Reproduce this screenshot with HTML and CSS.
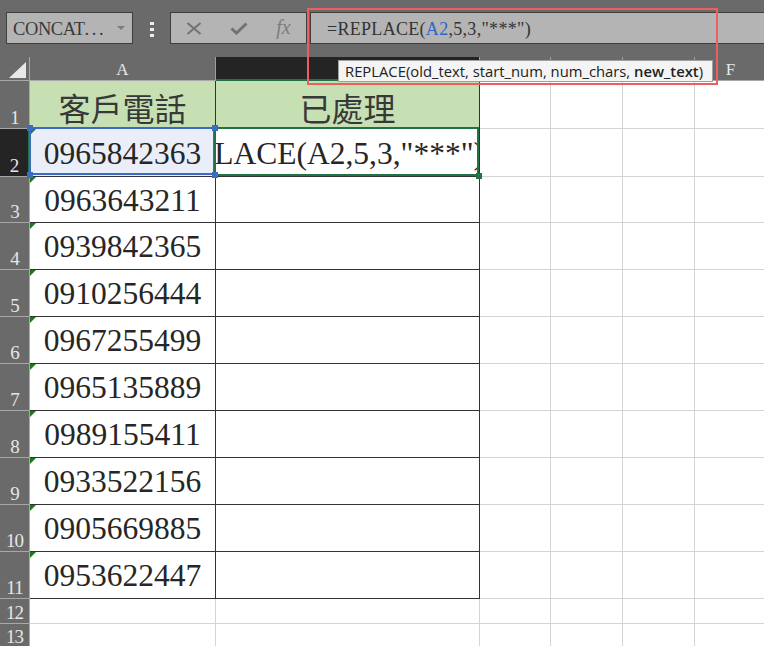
FILE: index.html
```html
<!DOCTYPE html>
<html lang="zh-Hant">
<head>
<meta charset="utf-8">
<title>REPLACE</title>
<link rel="stylesheet" href="styles.css">
</head>
<body>
<div class="app">
  <div class="fbar">
    <div class="namebox"><span class="nb-text">CONCAT<span class="ell">...</span></span><span class="nb-arrow"></span></div>
    <div class="grip"><i></i><i></i><i></i></div>
    <div class="fbtns">
      <span class="slot"><svg width="16" height="13" viewBox="0 0 16 13"><path d="M1.5 1 L14.5 12 M14.5 1 L1.5 12" stroke="#727272" stroke-width="2" fill="none"/></svg></span>
      <span class="slot"><svg width="18" height="13" viewBox="0 0 18 13"><path d="M1.5 6.5 L6.5 11 L16.5 1.5" stroke="#727272" stroke-width="3" fill="none"/></svg></span>
      <span class="slot fx">fx</span>
    </div>
    <div class="finput"><span class="ftext">=REPLACE(<span class="ref">A2</span>,5,3,"***")</span></div>
  </div>

  <div class="sheet">
    <div class="corner"><span class="tri"></span></div>
    <div class="ch">A</div>
    <div class="ch sel"></div>
    <div class="ch"></div>
    <div class="ch"></div>
    <div class="ch"></div>
    <div class="ch">F</div>

    <div class="rh">1</div>
    <div class="t hd">客戶電話</div>
    <div class="t hd">已處理</div>
    <div class="c"></div><div class="c"></div><div class="c"></div><div class="c"></div>

    <div class="rh sel">2</div>
    <div class="t num err selA">0965842363<span class="h tl"></span><span class="h tr"></span><span class="h bl"></span><span class="h br"></span></div>
    <div class="t edit"><div class="clip"><span class="etext">=REPLACE(A2,5,3,"***")</span></div><span class="gh"></span></div>
    <div class="c"></div><div class="c"></div><div class="c"></div><div class="c"></div>

    <div class="rh">3</div>
    <div class="t num err">0963643211</div>
    <div class="t"></div>
    <div class="c"></div><div class="c"></div><div class="c"></div><div class="c"></div>

    <div class="rh">4</div>
    <div class="t num err">0939842365</div>
    <div class="t"></div>
    <div class="c"></div><div class="c"></div><div class="c"></div><div class="c"></div>

    <div class="rh">5</div>
    <div class="t num err">0910256444</div>
    <div class="t"></div>
    <div class="c"></div><div class="c"></div><div class="c"></div><div class="c"></div>

    <div class="rh">6</div>
    <div class="t num err">0967255499</div>
    <div class="t"></div>
    <div class="c"></div><div class="c"></div><div class="c"></div><div class="c"></div>

    <div class="rh">7</div>
    <div class="t num err">0965135889</div>
    <div class="t"></div>
    <div class="c"></div><div class="c"></div><div class="c"></div><div class="c"></div>

    <div class="rh">8</div>
    <div class="t num err">0989155411</div>
    <div class="t"></div>
    <div class="c"></div><div class="c"></div><div class="c"></div><div class="c"></div>

    <div class="rh">9</div>
    <div class="t num err">0933522156</div>
    <div class="t"></div>
    <div class="c"></div><div class="c"></div><div class="c"></div><div class="c"></div>

    <div class="rh">10</div>
    <div class="t num err">0905669885</div>
    <div class="t"></div>
    <div class="c"></div><div class="c"></div><div class="c"></div><div class="c"></div>

    <div class="rh">11</div>
    <div class="t num err">0953622447</div>
    <div class="t"></div>
    <div class="c"></div><div class="c"></div><div class="c"></div><div class="c"></div>

    <div class="rh">12</div>
    <div class="c"></div><div class="c"></div>
    <div class="c"></div><div class="c"></div><div class="c"></div><div class="c"></div>

    <div class="rh">13</div>
    <div class="c"></div><div class="c"></div>
    <div class="c"></div><div class="c"></div><div class="c"></div><div class="c"></div>
  </div>

  <div class="tip"><span>REPLACE(old_text, start_num, num_chars, <b>new_text</b>)</span></div>
  <div class="hilite"></div>
</div>
</body>
</html>
```

FILE: styles.css
```css
* { box-sizing: border-box; }
html, body { margin: 0; padding: 0; background: #fff; }
body { overflow: hidden; }

.app {
  position: relative;
  width: 764px;
  height: 646px;
  overflow: hidden;
  font-family: "Liberation Serif", serif;
  background: #fff;
}

/* ---------- formula bar ---------- */
.fbar {
  height: 57px;
  background: #6a6a6a;
  display: flex;
  align-items: flex-start;
  padding-top: 12px;
}
.namebox {
  margin-left: 6px;
  width: 127px;
  height: 32px;
  flex: 0 0 127px;
  background: #b4b4b4;
  border: 1px solid #3e3e3e;
  display: flex;
  align-items: center;
  padding-left: 6px;
}
.nb-text {
  font-family: "Liberation Serif", serif;
  font-size: 18.5px;
  letter-spacing: -0.4px;
  color: #3a3a3a;
  padding-top: 3px;
  white-space: nowrap;
}
.ell { letter-spacing: 2.6px; }
.nb-arrow {
  margin-left: auto;
  margin-right: 7px;
  width: 0;
  height: 0;
  border-left: 4px solid transparent;
  border-right: 4px solid transparent;
  border-top: 4px solid #7c7c7c;
}
.grip {
  flex: 0 0 37px;
  display: flex;
  flex-direction: column;
  align-items: center;
  padding-top: 10px;
  gap: 3px;
}
.grip i {
  display: block;
  width: 4px;
  height: 3px;
  background: #ececec;
}
.fbtns {
  flex: 0 0 137px;
  height: 32px;
  background: #b4b4b4;
  border: 1px solid #3e3e3e;
  display: flex;
}
.slot {
  width: 45px;
  display: flex;
  align-items: center;
  justify-content: center;
}
.fx {
  font-family: "Liberation Serif", serif;
  font-style: italic;
  font-size: 20px;
  color: #7c7c7c;
  padding-bottom: 2px;
}
.finput {
  margin-left: 3px;
  flex: 1 1 auto;
  height: 32px;
  background: #b4b4b4;
  border: 1px solid #3e3e3e;
  border-right: none;
  padding-left: 16px;
  display: flex;
  align-items: center;
}
.ftext {
  font-family: "Liberation Serif", serif;
  font-size: 18px;
  letter-spacing: 0.3px;
  color: #333;
  padding-top: 3px;
  white-space: nowrap;
}
.ref { color: #2f66c4; }

/* ---------- sheet ---------- */
.sheet {
  display: grid;
  grid-template-columns: 30px 186px 264px 71px 72px 72px 72px;
  grid-template-rows: 24px 48px 48px 46px repeat(8, 47px) 25px 24px;
  width: 767px;
}
.corner {
  background: #6a6a6a;
  border-right: 1px solid #a8a8a8;
  border-bottom: 1px solid #a8a8a8;
  display: flex;
  align-items: flex-end;
  justify-content: flex-end;
  padding-right: 3px;
  padding-bottom: 2px;
}
.tri {
  width: 0;
  height: 0;
  border-left: 17px solid transparent;
  border-bottom: 16px solid #e8e8e8;
}
.ch {
  background: #6a6a6a;
  border-right: 1px solid #9c9c9c;
  border-bottom: 1px solid #a8a8a8;
  color: #e8e8e8;
  font-size: 17px;
  display: flex;
  align-items: center;
  justify-content: center;
  padding-top: 3px;
}
.ch.sel {
  background: #242424;
  border-bottom: 2px solid #217346;
}
.rh {
  background: #6a6a6a;
  border-right: 1px solid #a8a8a8;
  border-bottom: 1px solid #a8a8a8;
  color: #e6e6e6;
  font-size: 19px;
  line-height: 1;
  letter-spacing: -1px;
  display: flex;
  align-items: flex-end;
  justify-content: center;
  padding-bottom: 1px;
}
.rh.sel {
  background: #242424;
  border-right: 2px solid #217346;
}
.c {
  border-right: 1px solid #d4d4d4;
  border-bottom: 1px solid #d4d4d4;
}
.t {
  position: relative;
  border-right: 1px solid #333;
  border-bottom: 1px solid #333;
  display: flex;
  align-items: center;
  justify-content: center;
  color: #262626;
  font-size: 31.5px;
  white-space: nowrap;
}
.num { padding-top: 2px; }
.hd {
  background: #c6e0b4;
  font-family: "Noto Sans CJK TC", "Noto Sans CJK SC", sans-serif;
  font-size: 32px;
  line-height: 1;
  color: #383838;
  padding-top: 4px;
}
.err::before {
  content: "";
  position: absolute;
  left: 0;
  top: 0;
  width: 0;
  height: 0;
  border-top: 6px solid #1a7a1a;
  border-right: 6px solid transparent;
}
.selA { background: #e9eef8; }
.selA::after {
  content: "";
  position: absolute;
  left: -1px;
  top: -2px;
  right: 0;
  bottom: 1px;
  border: 2px solid #3a6cc6;
}
.h {
  position: absolute;
  width: 6px;
  height: 6px;
  background: #3a6cc6;
  z-index: 3;
}
.h.tl { left: -3px; top: -4px; }
.h.tr { left: 182px; top: -4px; }
.h.bl { left: -3px; top: 43px; }
.h.br { left: 182px; top: 43px; }

.edit::after {
  content: "";
  position: absolute;
  left: -2px;
  top: -2px;
  right: 0;
  bottom: 0;
  border: 2px solid #217346;
  z-index: 2;
}
.clip {
  width: 100%;
  height: 100%;
  overflow: hidden;
  display: flex;
  align-items: center;
  justify-content: flex-end;
  padding-top: 2px;
}
.etext {
  flex: 0 0 auto;
  margin-right: -5px;
  white-space: nowrap;
}
.gh {
  position: absolute;
  left: 260px;
  top: 44px;
  width: 6px;
  height: 6px;
  background: #217346;
  z-index: 3;
}

/* ---------- overlays ---------- */
.tip {
  position: absolute;
  left: 338px;
  top: 60px;
  width: 375px;
  height: 22px;
  background: #f4f4f4;
  border: 1px solid #a0a0a0;
  font-family: "Open Sans", sans-serif;
  font-size: 14.8px;
  color: #222;
  padding-left: 6px;
  display: flex;
  align-items: center;
  white-space: nowrap;
}
.tip b { font-weight: 600; }
.hilite {
  position: absolute;
  left: 307px;
  top: 8px;
  width: 411px;
  height: 77px;
  border: 2px solid #ee5e5e;
}
```
